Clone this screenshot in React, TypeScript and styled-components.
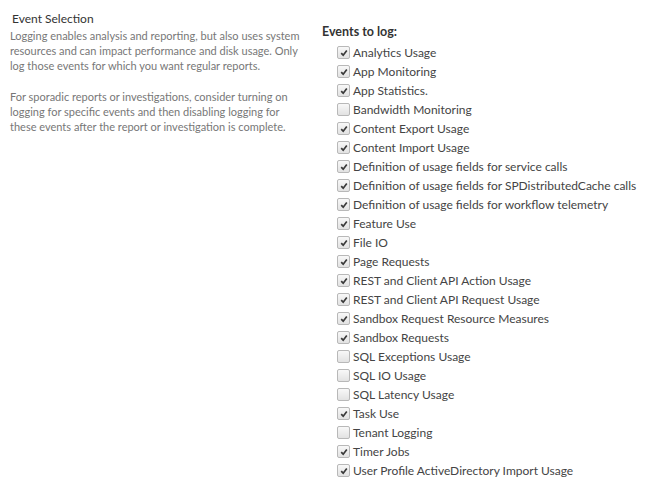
import React from "react"
import styled, { createGlobalStyle } from "styled-components"

const Global = createGlobalStyle`
    body {
        margin: 0;
        background: #fff;
        font-family: "Segoe UI", Lato, "Open Sans", sans-serif;
    }
`

const Page = styled.div`
    display: grid;
    grid-template-columns: 312px 1fr;
    padding: 10px 0 0 10px;
`

const Intro = styled.div`
    display: flex;
    flex-direction: column;
`

const Heading = styled.div`
    font-size: 12px;
    color: #333;
    padding-left: 2px;
    line-height: 17px;
`

const Para = styled.p`
    margin: 1px 0 15px;
    font-size: 11px;
    line-height: 15px;
    color: #777;
    white-space: nowrap;
`

const Events = styled.div`
    display: flex;
    flex-direction: column;
    padding-top: 14px;
`

const Title = styled.div`
    font-size: 12.5px;
    font-weight: bold;
    color: #333;
    line-height: 16px;
    margin-bottom: 3px;
`

const Row = styled.label`
    display: flex;
    align-items: center;
    height: 19px;
    padding-left: 15px;
    font-size: 12px;
    color: #444;
    gap: 3px;
    white-space: nowrap;
`

const Box = styled.span`
    width: 11px;
    height: 11px;
    border: 1px solid #b8b8b8;
    border-radius: 2px;
    background: linear-gradient(#f8f8f8, #e2e2e2);
    display: inline-flex;
    align-items: center;
    justify-content: center;
    flex-shrink: 0;
`

const events: [string, boolean][] = [
    ["Analytics Usage", true],
    ["App Monitoring", true],
    ["App Statistics.", true],
    ["Bandwidth Monitoring", false],
    ["Content Export Usage", true],
    ["Content Import Usage", true],
    ["Definition of usage fields for service calls", true],
    ["Definition of usage fields for SPDistributedCache calls", true],
    ["Definition of usage fields for workflow telemetry", true],
    ["Feature Use", true],
    ["File IO", true],
    ["Page Requests", true],
    ["REST and Client API Action Usage", true],
    ["REST and Client API Request Usage", true],
    ["Sandbox Request Resource Measures", true],
    ["Sandbox Requests", true],
    ["SQL Exceptions Usage", false],
    ["SQL IO Usage", false],
    ["SQL Latency Usage", false],
    ["Task Use", true],
    ["Tenant Logging", false],
    ["Timer Jobs", true],
    ["User Profile ActiveDirectory Import Usage", true],
]

function Check({ checked }: { checked: boolean }) {
    return (
        <Box>
            {checked && (
                <svg width="8" height="8" viewBox="0 0 8 8">
                    <path
                        d="M1.2 4.2 L3.2 6.2 L6.8 1.6"
                        fill="none"
                        stroke="#3a3a3a"
                        strokeWidth="1.7"
                    />
                </svg>
            )}
        </Box>
    )
}

function App() {
    return (
        <Page>
            <Global />
            <Intro>
                <Heading>Event Selection</Heading>
                <Para>
                    Logging enables analysis and reporting, but also uses system
                    <br />
                    resources and can impact performance and disk usage. Only
                    <br />
                    log those events for which you want regular reports.
                </Para>
                <Para>
                    For sporadic reports or investigations, consider turning on
                    <br />
                    logging for specific events and then disabling logging for
                    <br />
                    these events after the report or investigation is complete.
                </Para>
            </Intro>
            <Events>
                <Title>Events to log:</Title>
                {events.map(([name, on]) => (
                    <Row key={name}>
                        <Check checked={on} />
                        {name}
                    </Row>
                ))}
            </Events>
        </Page>
    )
}

export default App
